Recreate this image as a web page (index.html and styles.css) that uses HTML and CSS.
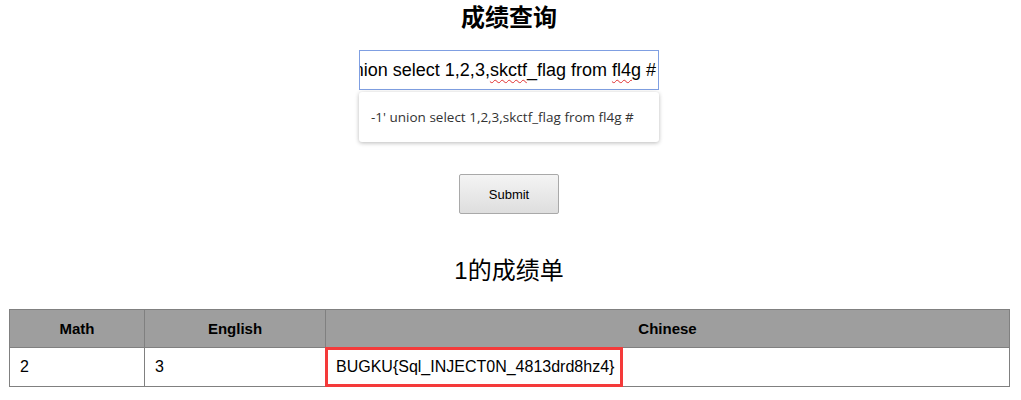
FILE: index.html
```html
<!DOCTYPE html>
<html lang="zh">
<head>
<meta charset="utf-8">
<title>成绩查询</title>
<link rel="stylesheet" href="styles.css">
</head>
<body>
<div class="page">
  <h1 class="title">成绩查询</h1>
  <form class="query">
    <div class="field">
      <div class="input"><span class="input-text">-1' union select 1,2,3,<span class="spell">skctf</span>_flag from <span class="spell">fl4g</span> #</span></div>
      <div class="suggest">-1' union select 1,2,3,skctf_flag from fl4g #</div>
    </div>
    <button type="button" class="submit">Submit</button>
  </form>
  <h2 class="subtitle">1的成绩单</h2>
  <table class="scores">
    <thead>
      <tr><th class="c-math">Math</th><th class="c-eng">English</th><th>Chinese</th></tr>
    </thead>
    <tbody>
      <tr><td>2</td><td>3</td><td class="flag-cell">BUGKU{Sql_INJECT0N_4813drd8hz4}<span class="mark"></span></td></tr>
    </tbody>
  </table>
</div>
</body>
</html>
```

FILE: styles.css
```css
html, body {
  margin: 0;
  padding: 0;
  background: #ffffff;
}
body {
  font-family: "Liberation Sans", Arial, "Noto Sans CJK SC", sans-serif;
  color: #000;
}
.page {
  padding: 0 12px 0 9px;
  display: flex;
  flex-direction: column;
  align-items: center;
}
.title {
  margin: -1px 0 0;
  font-family: "Noto Sans CJK SC", sans-serif;
  font-size: 24px;
  font-weight: 700;
  line-height: 34px;
}
.query {
  margin-top: 17px;
  display: flex;
  flex-direction: column;
  align-items: center;
}
.field {
  position: relative;
  width: 300px;
}
.input {
  box-sizing: border-box;
  width: 300px;
  height: 40px;
  border: 1px solid #7f9fe2;
  display: flex;
  justify-content: flex-end;
  align-items: center;
  overflow: hidden;
  padding-right: 2px;
  white-space: nowrap;
  font-size: 18px;
  color: #000;
}
.input-text {
  flex: none;
}
.spell {
  text-decoration: underline wavy #e03030;
  text-decoration-thickness: 1px;
  text-underline-offset: 3px;
}
.suggest {
  position: absolute;
  left: 0;
  top: 42px;
  box-sizing: border-box;
  width: 300px;
  height: 50px;
  padding-left: 12px;
  display: flex;
  align-items: center;
  background: #fff;
  border-radius: 3px;
  box-shadow: 0 1px 4px rgba(0, 0, 0, 0.28);
  font-family: "Open Sans", "Liberation Sans", sans-serif;
  font-size: 13.5px;
  color: #333;
  white-space: nowrap;
  z-index: 2;
}
.submit {
  margin-top: 84px;
  width: 100px;
  height: 40px;
  border: 1px solid #a9a9a9;
  border-radius: 2px;
  background: linear-gradient(#f4f4f4, #dedede);
  font-family: "Liberation Sans", Arial, sans-serif;
  font-size: 13px;
  color: #000;
  padding: 0;
}
.subtitle {
  margin: 41px 0 0;
  font-family: "Liberation Sans", "Noto Sans CJK SC", sans-serif;
  font-size: 24px;
  font-weight: 400;
  line-height: 32px;
}
.scores {
  margin-top: 22px;
  align-self: stretch;
  border-collapse: collapse;
  width: 1001px;
  font-size: 15px;
}
.scores th, .scores td {
  border: 1px solid #808080;
  box-sizing: border-box;
  padding: 0 10px;
}
.scores th {
  height: 38px;
  background: #9e9e9e;
  font-weight: 700;
  text-align: center;
}
.scores td {
  height: 39px;
  font-size: 16px;
  text-align: left;
  background: #fff;
}
.c-math { width: 135px; }
.c-eng { width: 181px; }
.flag-cell {
  position: relative;
}
.mark {
  position: absolute;
  left: -1px;
  top: -1px;
  width: 298px;
  height: 40px;
  box-sizing: border-box;
  border: 3px solid #f43a3a;
}
```
